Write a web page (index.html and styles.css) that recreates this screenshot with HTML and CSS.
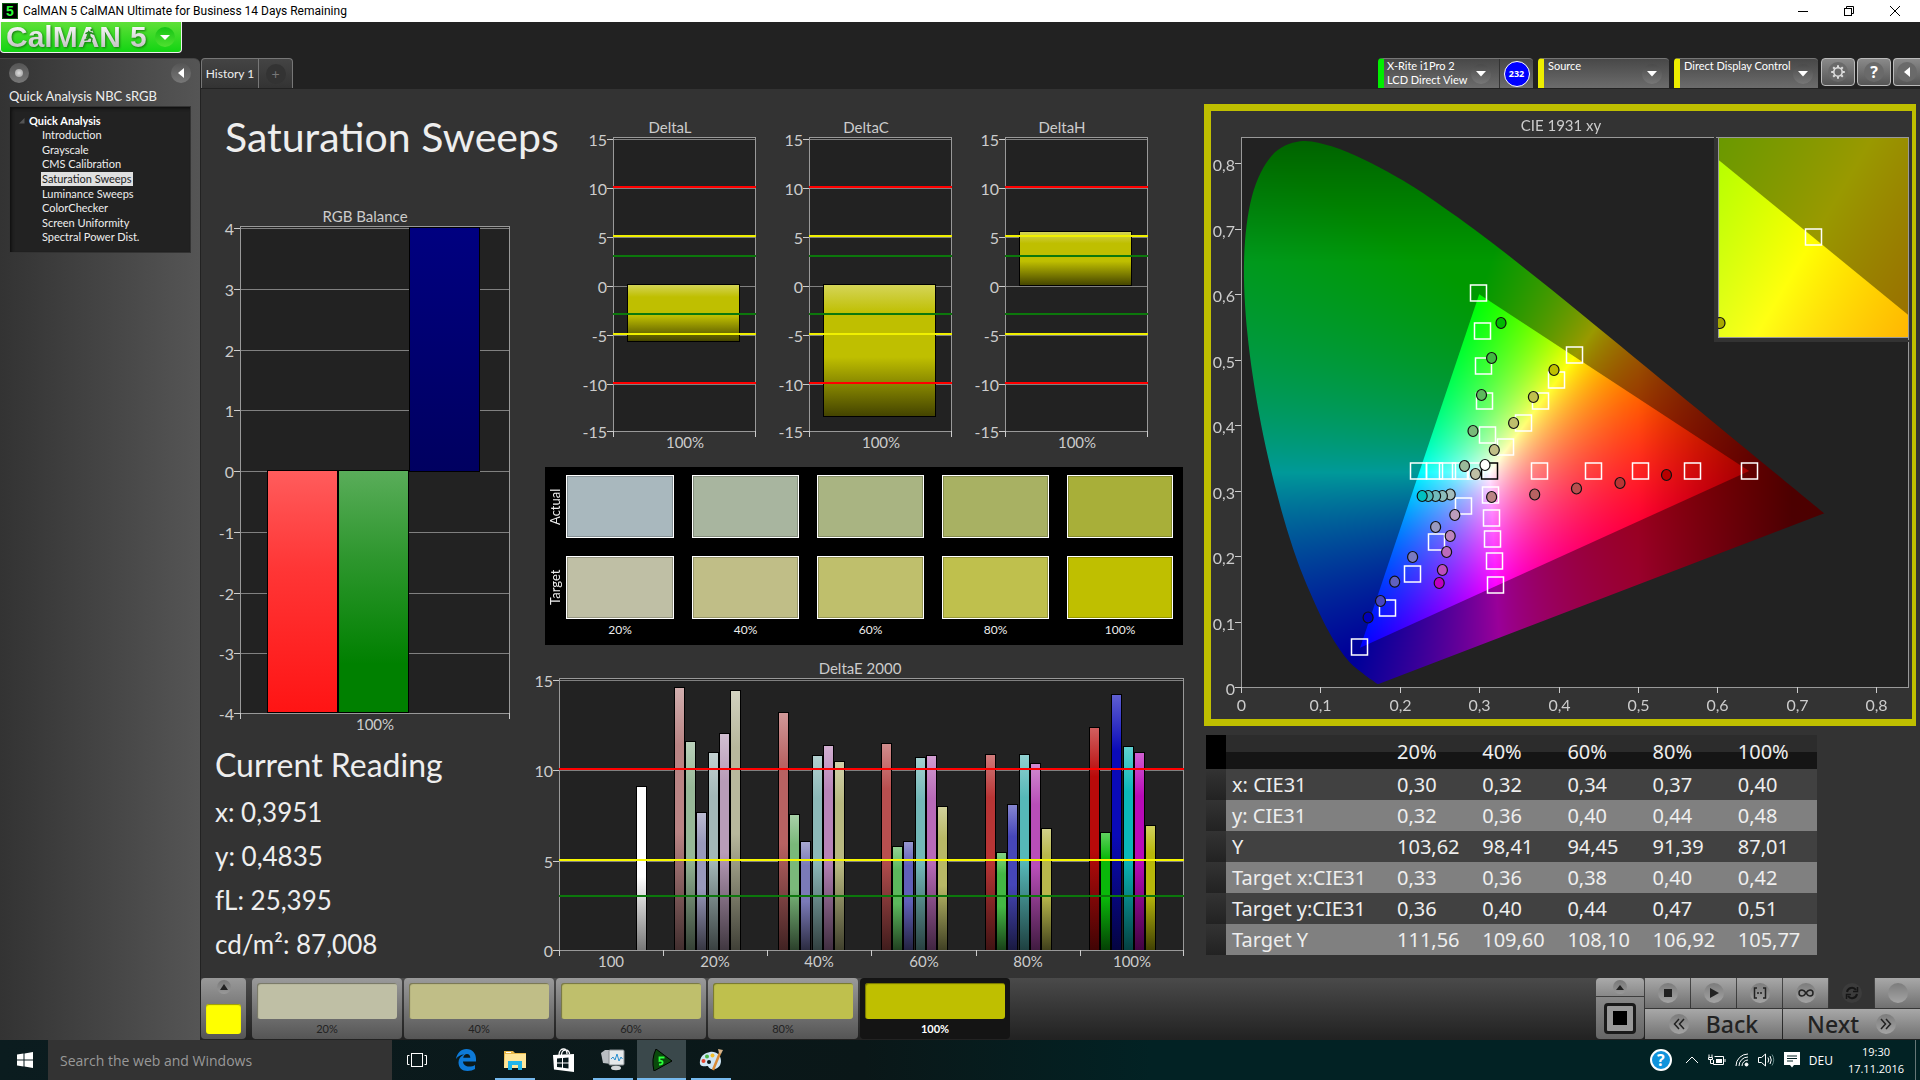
FILE: index.html
```html
<!DOCTYPE html>
<html lang="en">
<head>
<meta charset="utf-8">
<title>CalMAN 5 CalMAN Ultimate for Business 14 Days Remaining</title>
<link rel="stylesheet" href="styles.css">
</head>
<body>
<header class="titlebar">
  <span class="app-icon">5</span>
  <span class="window-title">CalMAN 5 CalMAN Ultimate for Business 14 Days Remaining</span>
  <div class="window-buttons">
    <button aria-label="Minimize"><svg width="12" height="12" viewBox="0 0 12 12"><path d="M1 6.500H11" stroke="#000"/></svg></button>
    <button aria-label="Restore"><svg width="12" height="12" viewBox="0 0 12 12" fill="none" stroke="#000"><path d="M3.500 3.500V1.500H10.500V8.500H8.500"/><rect x="1.500" y="3.500" width="7" height="7"/></svg></button>
    <button aria-label="Close"><svg width="12" height="12" viewBox="0 0 12 12"><path d="M1 1L11 11M11 1L1 11" stroke="#000"/></svg></button>
  </div>
</header>

<div class="app">
  <div class="left">
    <div class="logo-row">
      <button class="logo">
        <span class="logo-name">CalMAN</span><span class="logo-five">5</span>
        <svg class="runner" width="14" height="16" viewBox="0 0 14 16" fill="none" stroke="#1f8a1c" stroke-width="1.500" stroke-linecap="round"><circle cx="8.500" cy="3" r="1.200" fill="#1f8a1c" stroke="none"/><path d="M3 6.500L6 5L8.500 6L10.500 7M7 5.500L6 9.500L9 11.500L8.500 14.500M6 9.500L4.500 12.500L2 13"/></svg>
        <span class="round green"><svg width="12" height="7" viewBox="0 0 12 7"><path d="M1 1H11L6 6Z" fill="#fff"/></svg></span>
      </button>
    </div>
    <aside class="sidebar">
      <div class="side-top">
        <button class="round" aria-label="Options"><i class="ball"></i></button>
        <button class="round" aria-label="Collapse"><svg width="6" height="10" viewBox="0 0 6 10"><path d="M6 0V10L0 5Z" fill="#fff"/></svg></button>
      </div>
      <h2>Quick Analysis NBC sRGB</h2>
      <nav class="tree">
        <div class="tree-root"><svg width="6" height="6" viewBox="0 0 6 6"><path d="M5.500 0V5.500H0Z" fill="#555"/></svg>Quick Analysis</div>
        <ul>
          <li><a href="#">Introduction</a></li>
          <li><a href="#">Grayscale</a></li>
          <li><a href="#">CMS Calibration</a></li>
          <li><a href="#" class="current">Saturation Sweeps</a></li>
          <li><a href="#">Luminance Sweeps</a></li>
          <li><a href="#">ColorChecker</a></li>
          <li><a href="#">Screen Uniformity</a></li>
          <li><a href="#">Spectral Power Dist.</a></li>
        </ul>
      </nav>
    </aside>
  </div>

  <div class="right">
    <div class="toolbar">
      <div class="tabs">
        <button class="tab">History 1</button>
        <button class="tab plus" aria-label="Add tab"><span class="round dark">+</span></button>
      </div>
      <div class="devices">
        <div class="device meter">
          <button class="device-menu"><span>X-Rite i1Pro 2<br>LCD Direct View</span><span class="round"><svg width="10" height="6" viewBox="0 0 10 6"><path d="M0 0H10L5 5.500Z" fill="#fff"/></svg></span></button>
          <div class="badge-cell"><span class="count">232</span></div>
        </div>
        <button class="device device-menu source"><span>Source</span><span class="round"><svg width="10" height="6" viewBox="0 0 10 6"><path d="M0 0H10L5 5.500Z" fill="#fff"/></svg></span></button>
        <button class="device device-menu display"><span>Direct Display Control</span><span class="round"><svg width="10" height="6" viewBox="0 0 10 6"><path d="M0 0H10L5 5.500Z" fill="#fff"/></svg></span></button>
        <div class="tools">
          <button class="tool" aria-label="Settings"><span class="round"><svg width="16" height="16" viewBox="0 0 16 16" fill="none" stroke="#ddd"><circle cx="8" cy="8" r="4.200" stroke-width="1.600"/><path stroke-width="2" d="M8 1.200V3.400M8 12.600V14.800M1.200 8H3.400M12.600 8H14.800M3.200 3.200L4.800 4.800M11.200 11.200L12.800 12.800M3.200 12.800L4.800 11.200M11.200 4.800L12.800 3.200"/></svg></span></button>
          <button class="tool" aria-label="Help"><span class="round help">?</span></button>
          <button class="tool last" aria-label="Hide"><span class="round"><svg width="6" height="10" viewBox="0 0 6 10"><path d="M6 0V10L0 5Z" fill="#fff"/></svg></span></button>
        </div>
      </div>
    </div>

    <main class="content">
      <section class="col-a">
        <h1>Saturation Sweeps</h1>
        <svg id="rgb" class="chart" viewBox="0 0 320 530"></svg>
        <div class="reading">
          <h2>Current Reading</h2>
          <p>x: 0,3951</p>
          <p>y: 0,4835</p>
          <p>fL: 25,395</p>
          <p>cd/m²: 87,008</p>
        </div>
      </section>

      <section class="col-b">
        <div class="deltas">
          <svg id="deltaL" class="chart" viewBox="0 0 196 340"></svg>
          <svg id="deltaC" class="chart" viewBox="0 0 196 340"></svg>
          <svg id="deltaH" class="chart" viewBox="0 0 196 340"></svg>
        </div>
        <div class="swatches">
          <span class="side-label">Actual</span>
          <i class="sw a20"></i><i class="sw a40"></i><i class="sw a60"></i><i class="sw a80"></i><i class="sw a100"></i>
          <span class="side-label">Target</span>
          <i class="sw t20"></i><i class="sw t40"></i><i class="sw t60"></i><i class="sw t80"></i><i class="sw t100"></i>
          <span></span>
          <b>20%</b><b>40%</b><b>60%</b><b>80%</b><b>100%</b>
        </div>
        <svg id="deltaE" class="chart" viewBox="0 0 660 320"></svg>
      </section>

      <section class="col-c">
        <div class="cie">
          <canvas id="gamut" width="701" height="608"></canvas>
          <svg id="cie" class="chart" viewBox="0 0 701 608"></svg>
        </div>
        <table class="data">
          <thead><tr><td class="handle"></td><th class="name"></th><th>20%</th><th>40%</th><th>60%</th><th>80%</th><th>100%</th></tr></thead>
          <tbody>
            <tr><td class="handle"></td><th>x: CIE31</th><td>0,30</td><td>0,32</td><td>0,34</td><td>0,37</td><td>0,40</td></tr>
            <tr><td class="handle"></td><th>y: CIE31</th><td>0,32</td><td>0,36</td><td>0,40</td><td>0,44</td><td>0,48</td></tr>
            <tr><td class="handle"></td><th>Y</th><td>103,62</td><td>98,41</td><td>94,45</td><td>91,39</td><td>87,01</td></tr>
            <tr><td class="handle"></td><th>Target x:CIE31</th><td>0,33</td><td>0,36</td><td>0,38</td><td>0,40</td><td>0,42</td></tr>
            <tr><td class="handle"></td><th>Target y:CIE31</th><td>0,36</td><td>0,40</td><td>0,44</td><td>0,47</td><td>0,51</td></tr>
            <tr><td class="handle"></td><th>Target Y</th><td>111,56</td><td>109,60</td><td>108,10</td><td>106,92</td><td>105,77</td></tr>
          </tbody>
        </table>
      </section>
    </main>

    <footer class="strip">
      <button class="patch-now" aria-label="Current patch"><span class="round small"><svg width="8" height="6" viewBox="0 0 8 6"><path d="M0 6H8L4 0Z" fill="#222"/></svg></span><i></i></button>
      <div class="patches">
        <button class="patch"><i class="t20"></i>20%</button>
        <button class="patch"><i class="t40"></i>40%</button>
        <button class="patch"><i class="t60"></i>60%</button>
        <button class="patch"><i class="t80"></i>80%</button>
        <button class="patch active"><i class="t100"></i>100%</button>
      </div>
      <div class="transport">
        <div class="window-mode">
          <button aria-label="Expand"><span class="round small"><svg width="8" height="5" viewBox="0 0 8 5"><path d="M0 5H8L4 0Z" fill="#222"/></svg></span></button>
          <button class="pattern" aria-label="Pattern window"><span><i></i></span></button>
        </div>
        <div class="keys">
          <div class="row">
            <button aria-label="Stop"><span class="round"><svg width="8" height="8"><rect width="8" height="8" fill="#222"/></svg></span></button>
            <button aria-label="Play"><span class="round"><svg width="10" height="10" viewBox="0 0 10 10"><path d="M1 0V10L10 5Z" fill="#222"/></svg></span></button>
            <button aria-label="Read series"><span class="round"><svg width="14" height="12" viewBox="0 0 14 12" fill="none" stroke="#222" stroke-width="1.500"><path d="M4 1H1.500V11H4M10 1H12.500V11H10"/><path d="M4 6H10" stroke-dasharray="2 1"/></svg></span></button>
            <button aria-label="Continuous"><span class="round"><svg width="16" height="8" viewBox="0 0 16 8" fill="none" stroke="#222" stroke-width="1.500"><path d="M8 4C6 1 5 1 4 1A3 3 0 0 0 4 7C5 7 6 7 8 4C10 1 11 1 12 1A3 3 0 0 1 12 7C11 7 10 7 8 4Z"/></svg></span></button>
            <button class="pressed" aria-label="Refresh"><span class="round dark"><svg width="14" height="14" viewBox="0 0 14 14" fill="none" stroke="#161616" stroke-width="2"><path d="M2 6A5 5 0 0 1 11 4M12 8A5 5 0 0 1 3 10"/><path d="M12.500 1V5.500H8M1.500 13V8.500H6" stroke-width="1.500"/></svg></span></button>
            <button aria-label="Record"><span class="round"></span></button>
          </div>
          <div class="row big">
            <button><span class="round"><svg width="12" height="12" viewBox="0 0 12 12" fill="none" stroke="#222" stroke-width="1.500"><path d="M6 1L1.500 6L6 11M11 1L6.500 6L11 11"/></svg></span>Back</button>
            <button>Next<span class="round"><svg width="12" height="12" viewBox="0 0 12 12" fill="none" stroke="#222" stroke-width="1.500"><path d="M1 1L5.500 6L1 11M6 1L10.500 6L6 11"/></svg></span></button>
          </div>
        </div>
      </div>
    </footer>
  </div>
</div>

<footer class="taskbar">
  <button class="start" aria-label="Start"><svg width="18" height="18" viewBox="0 0 18 18" fill="#fff"><path d="M1 3.500L7.500 2.500V8.500H1ZM8.500 2.400L17 1V8.500H8.500ZM1 9.500H7.500V15.500L1 14.500ZM8.500 9.500H17V17L8.500 15.600Z"/></svg></button>
  <input class="search" type="text" placeholder="Search the web and Windows" aria-label="Search the web and Windows">
  <div class="apps">
    <button aria-label="Task view"><svg width="20" height="16" viewBox="0 0 20 16" fill="none" stroke="#fff"><rect x="4.500" y="1.500" width="11" height="13"/><path d="M2.500 3.500H.5V12.500H2.500M17.500 3.500H19.500V12.500H17.500"/></svg></button>
    <button aria-label="Edge"><svg width="20" height="22" viewBox="0 0 20 22"><path fill="#0d7ad8" d="M0 10C1 4 5 0 10.500 0C16.500 0 20 4.500 20 10V12.500H7C7.200 16 10 17.500 13 17.500C15.500 17.500 17.500 16.800 19 15.900V20C17 21.300 14.500 22 11.500 22C6 22 2.500 18.500 2.500 13.500C2.500 10 4.500 7 8 5.500C5 5.500 2 7.200 0 10ZM7.200 8.800H14.300C14.300 6.500 13 5 11 5C9 5 7.600 6.500 7.200 8.800Z"/></svg></button>
    <button class="open" aria-label="File Explorer"><svg width="22" height="20" viewBox="0 0 22 20"><path fill="#e8b84a" d="M0 1H9L11 3H22V18H0Z"/><path fill="#ffe69a" d="M1 4H22V18H0Z"/><path fill="#fff" d="M2 2H7V3H2Z"/><path fill="#22b5ea" d="M4 11H18V20H14V15H8V20H4Z"/></svg></button>
    <button aria-label="Store"><svg width="22" height="24" viewBox="0 0 22 24"><path d="M6 7C6 2 9 1 10.500 1C12.500 1 14 3 14 6M8.500 7C8.500 3 11 2 12.500 2C15 2 16.500 4 16.500 6" fill="none" stroke="#fff" stroke-width="1.300"/><path fill="#fff" d="M0 7L21 6V24L1 21.500Z"/><path fill="#08191c" d="M4 10.500L9 10V14.500H4ZM10 10L15.500 9.500V14.500H10ZM4 15.500H9V19.600L4 19ZM10 15.500H15.500V20.400L10 19.800Z"/></svg></button>
    <button class="open" aria-label="System monitor"><svg width="24" height="22" viewBox="0 0 24 22"><path fill="#b9bec2" d="M0 4L4 1H10V15L2 14Z"/><rect x="8" y="1" width="15" height="15" rx="1" fill="#e6e9eb" stroke="#8b9195"/><path d="M10 10L12 8L14 11L16 5L18 12L20 8L21.500 10" fill="none" stroke="#2b8fd0"/><ellipse cx="15" cy="19" rx="5" ry="2.200" fill="#d4d7d9"/></svg></button>
    <button class="open focus" aria-label="CalMAN"><svg width="22" height="22" viewBox="0 0 22 22"><path d="M5 0L21 12L3 22Q0 10 5 0Z" fill="#0a4a0c" stroke="#000"/><path d="M13.500 8.500H8.500V12C12.500 11 13 15.500 8 15.500" fill="none" stroke="#2bff3a" stroke-width="1.800"/></svg></button>
    <button class="open" aria-label="Paint"><svg width="24" height="22" viewBox="0 0 24 22"><path fill="#cfe6f5" d="M11 3C17 2 22 6 22 12C22 18 17 21 12 20C9 19 10 17 8 17C4 18 0 17 1 12C2 6 6 4 11 3Z"/><circle cx="4.500" cy="12" r="2" fill="#e6452e"/><circle cx="8" cy="7.500" r="2" fill="#4cb748"/><circle cx="13.500" cy="6.500" r="2" fill="#f3c02c"/><circle cx="10" cy="13" r="2" fill="#08191c"/><path d="M14 21L21 4" stroke="#d88a35" stroke-width="2.500"/><path d="M20 4L19 0L24 1L22 5Z" fill="#d7b48a"/></svg></button>
  </div>
  <div class="tray">
    <span class="tray-help">?</span>
    <svg width="14" height="8" viewBox="0 0 14 8" fill="none" stroke="#fff"><path d="M1 7L7 1L13 7"/></svg>
    <svg width="18" height="12" viewBox="0 0 18 12" fill="none" stroke="#fff"><path d="M1 .5V3M4 .5V3M.5 3.500H4.500V5.500H.5ZM2.500 6V9.500H5M6.500 2.500H15.500V10.500H5.500V6M17 5V8"/><rect x="8" y="5" width="6" height="4" fill="#fff" stroke="none"/></svg>
    <svg width="14" height="14" viewBox="0 0 14 14" fill="none" stroke="#fff"><path d="M1 13A12 12 0 0 1 13 1M4 13A9 9 0 0 1 13 4M7 13A6 6 0 0 1 13 7"/><circle cx="11.500" cy="11.500" r="1.500" fill="#fff"/></svg>
    <svg width="17" height="14" viewBox="0 0 17 14" fill="none" stroke="#fff"><path d="M.5 4.500H3.500L7.500 1V13L3.500 9.500H.5Z"/><path d="M10 4.500Q11.500 7 10 9.500M12 3Q14.500 7 12 11"/><path d="M14 1.500Q17.500 7 14 12.500" stroke="#688"/></svg>
    <svg width="16" height="16" viewBox="0 0 16 16"><path fill="#fff" d="M0 0H16V13H10L8 15.500L6 13H0Z"/><path d="M3 4H13M3 6.500H13M3 9H9" stroke="#022224"/></svg>
    <span class="lang">DEU</span>
    <span class="clock">19:30<br>17.11.2016</span>
    <i class="peek"></i>
  </div>
</footer>
<script src="charts.js"></script>
</body>
</html>
```
FILE: styles.css
```css
* { box-sizing: border-box; }
body {
  margin: 0;
  min-height: 100vh;
  display: flex;
  flex-direction: column;
  background: #222;
  color: #eee;
  font-family: Lato, "Liberation Sans", sans-serif;
  font-size: 14px;
}
button { font: inherit; color: inherit; border: 0; padding: 0; margin: 0; background: none; }
h1, h2, p, ul { margin: 0; padding: 0; font-weight: 400; }
ul { list-style: none; }
svg, canvas { display: block; }
i { display: block; }

/* Window title bar */
.titlebar { height: 22px; display: flex; align-items: center; background: #fff; color: #000; font: 12px/22px Roboto, sans-serif; }
.app-icon { width: 16px; height: 16px; margin: 0 5px 0 2px; background: #000; border: 1px solid #0b5a10; color: #2bff3a; font: bold 14px/14px "Liberation Sans", sans-serif; text-align: center; }
.window-buttons { margin-left: auto; display: flex; padding-right: 2px; }
.window-buttons button { width: 46px; height: 20px; display: flex; align-items: center; justify-content: center; }

.app { flex: 1; display: flex; }
.left { width: 200px; display: flex; flex-direction: column; }
.right { flex: 1; min-width: 0; display: flex; flex-direction: column; margin-left: 1px; padding-top: 36px; }

/* Logo */
.logo-row { height: 36px; }
.logo { position: relative; width: 182px; height: 31px; display: flex; align-items: center; padding-left: 5px; background: linear-gradient(#5fe038, #12d412); border: 1px solid #eee; border-top: 0; border-radius: 0 0 4px 4px; font: bold 30px/28px "Liberation Sans", sans-serif; }
.logo-name, .logo-five { background: linear-gradient(#fff, #bbb); -webkit-background-clip: text; background-clip: text; color: transparent; filter: drop-shadow(1px 1px 1px #167a10); }
.logo-five { margin-left: 9px; }
.runner { position: absolute; left: 82px; top: 5px; }
.logo .round { margin-left: auto; margin-right: 6px; }

.round { width: 20px; height: 20px; flex: none; border-radius: 50%; display: flex; align-items: center; justify-content: center; background: linear-gradient(#4a4a4a, #777); color: #fff; }
.round.green { background: linear-gradient(#14c414, #50e030); }
.round.dark { background: #333; color: #777; font-size: 14px; }
.round.small { width: 14px; height: 14px; background: linear-gradient(#777, #999); }

/* Sidebar */
.sidebar { flex: 1; padding: 4px 9px 0; background: linear-gradient(90deg, #333, #555); border-radius: 0 6px 0 0; border-top: 1px solid #444; }
.side-top { display: flex; justify-content: space-between; height: 24px; }
.ball { width: 8px; height: 8px; border-radius: 50%; background: radial-gradient(#ddd, #999); }
.side-top .round { background: linear-gradient(#555, #777); }
.sidebar h2 { font-size: 13px; line-height: 18px; }
.tree { margin-top: 1px; padding: 6px 0 5px; background: #222; border: 1px solid #333; box-shadow: inset 2px 2px 3px #111; height: 147px; }
.tree-root { display: flex; align-items: center; gap: 4px; padding-left: 9px; font-size: 11px; line-height: 15px; font-weight: 700; color: #fff; }
.tree ul { display: grid; grid-template-rows: repeat(8, 1fr); height: 117px; padding-left: 31px; font-size: 11px; line-height: 14px; }
.tree li { height: 14px; }
.tree a { color: #eee; text-decoration: none; padding: 0 1px; display: block; width: fit-content; }
.tree a.current { background: #e0e0e0; color: #222; }

/* Toolbar */
.toolbar { height: 31px; display: flex; justify-content: space-between; align-items: flex-start; }
.tabs { display: flex; border: 1px solid #777; border-bottom: 0; border-radius: 4px 4px 0 0; background: linear-gradient(#444, #333); height: 30px; }
.tab { width: 56px; font-size: 12px; }
.tab.plus { width: 34px; border-left: 1px solid #777; display: flex; align-items: center; justify-content: center; }
.devices { display: flex; align-items: flex-start; font-size: 11px; line-height: 14px; color: #fff; white-space: nowrap; }
.device { height: 30px; background: linear-gradient(#484848, #6c6c6c); border-top: 1px solid #777; border-left: 6px solid #ee0; border-radius: 4px 4px 0 0; margin-right: 5px; }
.device-menu { display: flex; justify-content: space-between; text-align: left; padding: 0 7px 0 4px; }
.device-menu .round { align-self: center; }
.meter { display: flex; border-left-color: #0e0; width: 155px; }
.meter .device-menu { flex: 1; padding: 0 8px 0 3px; }
.badge-cell { width: 34px; display: flex; align-items: center; justify-content: center; border-left: 1px solid #333; }
.count { width: 26px; height: 26px; border-radius: 50%; background: #00f; border: 1px solid #fff; display: flex; align-items: center; justify-content: center; font: bold 9px/12px "Open Sans", sans-serif; }
.source { width: 131px; }
.display { width: 144px; margin-right: 3px; }
.display .round { margin-left: 2px; }
.tools { display: flex; gap: 2px; }
.tool { width: 34px; height: 28px; border: 1px solid #bbb; border-radius: 4px; background: linear-gradient(#8a8a8a, #555); display: flex; align-items: center; justify-content: center; }
.tool.last { width: 27px; border-right: 0; border-radius: 4px 0 0 4px; }
.tool .round { background: #6a6a6a; }
.help { font: bold 16px/20px "Open Sans", sans-serif; }

/* Main content */
.content { flex: 1; display: grid; grid-template-columns: minmax(0, 320fr) minmax(0, 673fr) minmax(0, 712fr); align-items: start; padding: 0 4px 0 10px; background: #333; }
.chart { width: 100%; height: auto; }
.chart text { fill: #ccc; font-size: 15px; }
.chart text.tick { font-size: 16px; }
h1 { font-size: 41px; line-height: 48px; padding: 24px 0 44px 14px; white-space: nowrap; }
.reading { padding-left: 4px; margin-top: 10px; }
.reading h2 { font-size: 32px; line-height: 40px; margin-bottom: 5px; }
.reading p { font-size: 26px; line-height: 44px; }
.col-b { padding-right: 13px; }
.deltas { display: grid; grid-template-columns: repeat(3, 1fr); padding: 26px 32px 0 40px; }
.swatches { margin: 12px 8px 10px 14px; padding: 8px 10px 4px 0; display: grid; grid-template-columns: 21px 108fr 125fr 125fr 125fr 124fr; grid-template-rows: 63px 18px 63px 22px; background: #000; }
.swatches > :nth-child(n+7):nth-child(-n+12) { grid-row: 3; }
.swatches > :nth-child(n+13) { grid-row: 4; }
.side-label { writing-mode: vertical-rl; rotate: 180deg; text-align: center; font-size: 13px; line-height: 21px; }
.sw { border: 1px solid #fff; box-shadow: inset 0 0 0 1px rgba(0, 0, 0, .2); margin-left: 18px; }
.swatches b { font-weight: 400; font-size: 12px; line-height: 22px; text-align: center; margin-left: 18px; }
.side-label + .sw, .swatches span + b { margin-left: 0; }
.a20 { background: #a9b8be; } .a40 { background: #a8b59f; } .a60 { background: #a9b482; } .a80 { background: #a8b163; } .a100 { background: #a8af39; }
.t20 { background: #bfbfa5; } .t40 { background: #c0be87; } .t60 { background: #bfbf6c; } .t80 { background: #bfc04d; } .t100 { background: #bfbf00; }

.cie { display: grid; margin-top: 15px; border: 7px solid #bfbf00; border-right-width: 4px; }
.cie > * { grid-area: 1 / 1; width: 100%; height: auto; }

.data { margin: 9px 0 0 2px; width: 611px; table-layout: fixed; border-collapse: collapse; font: 20px/31px "Noto Sans", sans-serif; }
.data th, .data td { padding: 0 0 0 6px; font-weight: 400; text-align: left; white-space: nowrap; color: #eee; }
.data .name { width: 165px; }
.data thead th { background: linear-gradient(#2c2c2c 50%, #151515 50%); line-height: 34px; }
.data .handle { width: 20px; padding: 0; background: linear-gradient(#333, #222); }
.data thead .handle { background: #000; }
.data tbody tr { background: #414141; }
.data tbody tr:nth-child(even) { background: #808080; }

/* Patch strip */
.strip { height: 62px; display: flex; background: linear-gradient(#4a4a4a, #222); border-bottom: 1px solid #222; }
.patch-now { width: 45px; height: 61px; padding: 2px 5px 5px; display: flex; flex-direction: column; align-items: center; justify-content: space-between; background: linear-gradient(#999, #555); border-radius: 4px; margin-right: 6px; }
.patch-now i { width: 35px; height: 30px; background: #ff0; border-radius: 3px; box-shadow: inset 0 1px 1px #990; }
.patches { display: flex; gap: 2px; }
.patch { width: 150px; height: 61px; padding: 5px; border-radius: 4px; background: linear-gradient(#9a9a9a, #555); color: #222; font-size: 11px; line-height: 20px; }
.patch i { height: 36px; border-radius: 3px; box-shadow: inset 1px 1px 1px rgba(0, 0, 0, .4); }
.patch.active { background: #141414; color: #fff; font-weight: 700; }
.transport { margin-left: auto; display: flex; gap: 1px; }
.window-mode { width: 48px; display: flex; flex-direction: column; gap: 1px; }
.window-mode button { height: 18px; display: flex; align-items: center; justify-content: center; background: linear-gradient(#aaa, #888); border-radius: 4px 4px 0 0; }
.window-mode .pattern { height: 42px; background: linear-gradient(#888, #666); border-radius: 0 0 4px 4px; }
.pattern span { width: 32px; height: 31px; border: 3px solid #1a1a1a; border-radius: 4px; background: #999; display: flex; align-items: center; justify-content: center; }
.pattern i { width: 14px; height: 14px; background: #000; }
.keys { display: flex; flex-direction: column; gap: 1px; }
.row { height: 30px; display: grid; grid-template-columns: repeat(6, 45px); gap: 1px; }
.row button { display: flex; align-items: center; justify-content: center; background: linear-gradient(#a8a8a8, #707070); color: #222; }
.row .round { background: linear-gradient(#7c7c7c, #a4a4a4); }
.row button.pressed { background: #333; }
.row .round.dark { background: #3c3c3c; }
.row.big { grid-template-columns: 1fr 1fr; font: 500 23px/30px "Noto Sans", sans-serif; }
.big button { gap: 17px; }

/* Taskbar */
.taskbar { height: 40px; display: flex; background: linear-gradient(90deg, #0b1c1f, #0a1718 45%, #022224 60%); }
.start { width: 48px; display: flex; align-items: center; justify-content: center; padding-left: 1px; }
.search { width: 344px; border: 0; border-radius: 0; background: #333; color: #eee; padding: 0 12px; font: 14px "Open Sans", sans-serif; }
.search::placeholder { color: #999; opacity: 1; }
.apps { display: flex; }
.apps button { width: 49px; display: flex; align-items: center; justify-content: center; }
.apps .open { background: linear-gradient(#76b9ed, #76b9ed) bottom / 40px 2px no-repeat; }
.apps .focus { background: linear-gradient(#76b9ed, #76b9ed) bottom / 100% 2px no-repeat, #3a484b; }
.tray { margin-left: auto; display: flex; align-items: center; gap: 9px; font: 12px/17px "Open Sans", sans-serif; color: #fff; }
.tray-help { width: 22px; height: 22px; border: 2px solid #fff; border-radius: 50%; background: #1093dc; text-align: center; font-weight: 700; font-size: 16px; line-height: 18px; margin-right: 4px; }
.clock { text-align: center; margin-left: 6px; font-size: 11px; }
.peek { width: 5px; height: 40px; border-left: 1px solid #677; margin-left: 2px; }
```
FILE: charts.js
```js
// ---- bar charts -----------------------------------------------------------
const el = id => document.getElementById(id);
const line = (x1, y1, x2, y2, c, w = 1) =>
  `<line x1="${x1}" y1="${y1}" x2="${x2}" y2="${y2}" stroke="${c}" stroke-width="${w}"/>`;
const text = (x, y, s, anchor = 'middle', cls = 'tick') =>
  `<text class="${cls}" x="${x}" y="${y}" text-anchor="${anchor}">${s}</text>`;

function gradient(id, stops) {
  return `<linearGradient id="${id}" x1="0" y1="0" x2="0" y2="1">` +
    stops.map(([o, c]) => `<stop offset="${o}" stop-color="${c}"/>`).join('') + '</linearGradient>';
}
function mix(hex, other, k) {
  const n = [1, 3, 5].map(i => parseInt(hex.substr(i, 2), 16));
  return `rgb(${n.map(v => Math.round(v * (1 - k) + other * k)).join(',')})`;
}
const glossy = c => [[0, mix(c, 255, .35)], [.22, c], [.55, c], [1, mix(c, 0, .65)]];

function barChart(id, o) {
  const [x0, y0, x1, y1] = o.plot;
  const at = v => Math.round(o.zero - v * o.unit);
  let defs = '', s = '';
  s += `<rect x="${x0}" y="${y0}" width="${x1 - x0}" height="${y1 - y0}" fill="#222"/>`;
  for (const v of o.ticks) {
    const y = Math.min(at(v), y1) + .5;
    s += line(x0, y, x1, y, '#808080') + line(x0 - 6, y, x0, y, '#ccc');
    s += text(x0 - 6, y + 6, v, 'end');
  }
  o.bars.forEach((b, i) => {
    const gid = `${id}-g${i}`;
    defs += gradient(gid, b.stops || glossy(b.color));
    s += `<rect x="${b.x + .5}" y="${b.top + .5}" width="${b.w}" height="${b.bottom - b.top - 1}" fill="url(#${gid})" stroke="#000"/>`;
  });
  s += `<rect x="${x0 + .5}" y="${y0 + .5}" width="${x1 - x0 - 1}" height="${y1 - y0}" fill="none" stroke="#999"/>`;
  for (const [v, c] of o.limits || []) s += line(x0, at(v) - 1, x1, at(v) - 1, c, 2);
  for (const x of o.xTicks) s += line(x + .5, y1, x + .5, y1 + 6, '#ccc');
  for (const [x, t] of o.xLabels) s += text(x, y1 + 17, t, 'middle', 'label');
  s += text(o.titleX, y0 - 4, o.title, 'middle', 'label');
  el(id).innerHTML = `<defs>${defs}</defs>${s}`;
}

barChart('rgb', {
  title: 'RGB Balance', titleX: 154, plot: [29, 21, 299, 508], zero: 266, unit: 60.750,
  ticks: [4, 3, 2, 1, 0, -1, -2, -3, -4], xTicks: [29, 298], xLabels: [[164, '100%']],
  bars: [
    { x: 56, w: 70, top: 265, bottom: 508, stops: [[0, '#ff5c5c'], [.4, '#ff3636'], [1, '#ff1414']] },
    { x: 127, w: 70, top: 265, bottom: 508, stops: [[0, '#5aad5a'], [.35, '#2f972f'], [.8, '#008000'], [1, '#008000']] },
    { x: 198, w: 70, top: 22, bottom: 267, stops: [[0, '#000080'], [1, '#000060']] }
  ]
});

[['deltaL', 'DeltaL', 169, 227], ['deltaC', 'DeltaC', 169, 302], ['deltaH', 'DeltaH', 116, 171]].forEach(([id, title, top, bottom]) =>
  barChart(id, {
    title, titleX: 99, plot: [42, 22, 185, 316], zero: 171, unit: 9.800,
    ticks: [15, 10, 5, 0, -5, -10, -15], xTicks: [42, 184], xLabels: [[114, '100%']],
    limits: [[10, '#ff0000'], [5, '#f0f000'], [3, '#0c780c'], [-3, '#0c780c'], [-5, '#f0f000'], [-10, '#ff0000']],
    bars: [{ x: 56, w: 112, top, bottom, color: '#bfbf00' }]
  }));

const groups = [
  [143, [32, 86, 157, 97, 78, 35], ['#b98484', '#97b897', '#9999bb', '#a3b8b8', '#b89cb8', '#b8b89c']],
  [247, [57, 159, 186, 100, 90, 106], ['#b86262', '#7ab87a', '#7a7ab8', '#8cb8b8', '#b884b8', '#b8b880']],
  [350, [88, 191, 186, 102, 100, 151], ['#b84f4f', '#5cb85c', '#6060b8', '#73b8b8', '#b86ab8', '#b8b866']],
  [454, [99, 197, 149, 99, 108, 173], ['#b83535', '#44b844', '#4646b8', '#56b8b8', '#b84eb8', '#b8b84c']],
  [558, [72, 177, 39, 91, 97, 170], ['#b80a0a', '#0ab80a', '#0a0ab8', '#0ab8b8', '#b80ab8', '#b8b80a']]
];
const deBars = [{ x: 105, w: 10, top: 131, bottom: 296, stops: [[0, '#fff'], [.55, '#fff'], [1, '#777']] }];
for (const [x, tops, colors] of groups)
  tops.forEach((top, i) => deBars.push({ x: x + Math.round(i * 11.200), w: 10, top, bottom: 296, color: colors[i] }));
barChart('deltaE', {
  title: 'DeltaE 2000', titleX: 329, plot: [28, 23, 653, 295], zero: 296, unit: 18.070,
  ticks: [15, 10, 5, 0], limits: [[10, '#ff0000'], [5, '#f8f800'], [3, '#0c780c']],
  xTicks: [28, 132, 236, 340, 445, 549, 652],
  xLabels: [[80, '100'], [184, '20%'], [288, '40%'], [393, '60%'], [497, '80%'], [601, '100%']],
  bars: deBars
});

// ---- CIE 1931 chromaticity diagram ----------------------------------------
const PX = 30, PY = 26, PR = 698, PB = 576, SX = 794, SY = 654.500;
const toX = x => PX + x * SX, toY = y => PB - y * SY;
const locus = [.1741,.005,.1714,.0051,.1644,.0109,.1566,.0177,.144,.0297,.1355,.0399,.1241,.0578,.1096,.0868,.0913,.1327,.0687,.2007,.0454,.295,.0235,.4127,.0082,.5384,.0039,.6548,.0139,.7502,.0389,.812,.0743,.8338,.1142,.8262,.1547,.8059,.1929,.7816,.2296,.7543,.3016,.6923,.3731,.6245,.4441,.5547,.5125,.4866,.5752,.4242,.627,.3725,.6658,.334,.6915,.3083,.719,.2809,.7347,.2653];
const triangle = [[.3, .6], [.64, .33], [.15, .06]];

// Colour at a chromaticity: linear sRGB scaled to full brightness, fading at the green and red ends
function shade(x, y, k) {
  const X = x / y, Z = (1 - x - y) / y;
  const c = [3.2406 * X - 1.5372 - .4986 * Z, -.9689 * X + 1.8758 + .0415 * Z, .0557 * X - .204 + 1.057 * Z].map(v => Math.max(0, v));
  const m = Math.max(...c);
  let f = k;
  if (x > .5) f *= Math.max(.5, 1 - (x - .5) * 2.600);
  if (y > .65) f *= Math.max(.6, 1 - (y - .65) * 1.900);
  return c.map(v => 255 * f * v / m);
}
function field(w, h, xOf, yOf, k) {
  const c = document.createElement('canvas');
  c.width = w; c.height = h;
  const g = c.getContext('2d'), d = g.createImageData(w, h);
  for (let j = 0, p = 0; j < h; j++) for (let i = 0; i < w; i++, p += 4) {
    const [r, gg, b] = shade(xOf(i), Math.max(.002, yOf(j)), k);
    d.data[p] = r; d.data[p + 1] = gg; d.data[p + 2] = b; d.data[p + 3] = 255;
  }
  g.putImageData(d, 0, 0);
  return c;
}
const g = el('gamut').getContext('2d');
g.fillStyle = '#222';
g.fillRect(PX, PY, PR - PX, PB - PY);

const pts = [];
for (let i = 0; i < locus.length; i += 2) pts.push([toX(locus[i]), toY(locus[i + 1])]);
const W = PR - PX, H = PB - PY;
const mainX = i => i / SX, mainY = j => (H - j) / SY;
g.save();
g.beginPath();
g.moveTo(...pts[0]);
for (let i = 0; i < pts.length - 1; i++) {
  const a = pts[Math.max(0, i - 1)], b = pts[i], c = pts[i + 1], d = pts[Math.min(pts.length - 1, i + 2)];
  g.bezierCurveTo(b[0] + (c[0] - a[0]) / 6, b[1] + (c[1] - a[1]) / 6, c[0] - (d[0] - b[0]) / 6, c[1] - (d[1] - b[1]) / 6, c[0], c[1]);
}
g.closePath();
g.clip();
g.drawImage(field(W, H, mainX, mainY, .6), PX, PY);
g.restore();
g.save();
g.beginPath();
triangle.forEach(([x, y]) => g.lineTo(toX(x), toY(y)));
g.closePath();
g.clip();
g.drawImage(field(W, H, mainX, mainY, 1), PX, PY);
g.restore();

// Magnified view round the selected target
const IX = 507, IY = 26, IW = 190, IH = 200, CX = .4193, CY = .5053, MX = 3840, MY = 3950;
const inX = i => CX + (i - 95) / MX, inY = j => CY - (j - 100) / MY;
g.fillStyle = '#333';
g.fillRect(IX - 3, IY, IW + 7, IH + 4);
g.drawImage(field(IW, IH, inX, inY, .6), IX, IY);
g.save();
g.beginPath();
g.rect(IX, IY, IW, IH);
g.clip();
g.beginPath();
triangle.forEach(([x, y]) => g.lineTo(IX + 95 + (x - CX) * MX, IY + 100 - (y - CY) * MY));
g.closePath();
g.clip();
g.drawImage(field(IW, IH, inX, inY, 1), IX, IY);
g.restore();

const targets = [
  [237,156],[241,194],[242,229],[243,264],[246,298],[333,218],[315,243],[299,264],[282,286],[264,310],
  [508,334],[451,334],[399,334],[352,334],[298,334],[177,334],[193,334],[206,334],[219,334],[234,334],
  [249,358],[250,381],[251,402],[253,424],[254,448],[222,369],[195,405],[171,437],[146,471],[118,510]
];
const readings = [
  [260,186,'#00b900'],[250.600,221,'#40b940'],[240.500,258,'#5cb95c'],[232,294,'#79b979'],[223.500,329,'#9aba9a'],
  [313,233,'#bfbf00'],[292.400,260,'#bfbf4d'],[272.600,286,'#bfbf6c'],[253.300,313,'#c0be87'],[234.500,337,'#bfbfa5'],
  [425.500,338,'#b80000'],[379,346,'#b83535'],[335.500,351.500,'#b84f4f'],[293.700,357.500,'#b86262'],[250.600,360,'#b98484'],
  [209.200,357.500,'#a3bcbc'],[201.400,359,'#8cbcbc'],[194.600,359,'#70bcbc'],[187.200,359,'#50bcbc'],[181.200,359,'#00c0c0'],
  [213.800,378,'#bc9cbc'],[209.200,399,'#bc84bc'],[205.600,415,'#bc6abc'],[201.400,433,'#bc4ebc'],[198.200,446,'#bf00bf'],
  [194.600,390,'#9999bf'],[171.600,420,'#7a7abf'],[153.700,444.700,'#6060bf'],[139.500,464,'#4646bf'],[127.100,480.500,'#0000b8'],
  [244,328,'#ffffff']
];
const square = (x, y, c) => `<rect x="${x - 7.500}" y="${y - 8}" width="16" height="16" fill="none" stroke="${c}" stroke-width="1.500"/>`;
const dot = (x, y, c) => `<ellipse cx="${x}" cy="${y}" rx="5" ry="5.500" fill="${c}" stroke="#111" stroke-width="1.200"/>`;
let s = `<rect x="${PX + .5}" y="${PY + .5}" width="${W - 1}" height="${H}" fill="none" stroke="#999"/>`;
s += `<rect x="${IX - 3}" y="${IY - 1}" width="${IW + 5}" height="${IH + 5}" fill="none" stroke="#333" stroke-width="2"/>`;
s += `<rect x="${IX + .5}" y="${IY + .5}" width="${IW}" height="${IH}" fill="none" stroke="#999"/>`;
for (let i = 0; i <= 8; i++) {
  const label = i ? '0,' + i : '0', x = Math.round(toX(i / 10)) + .5, y = Math.round(toY(i / 10)) + .5;
  s += line(x, PB, x, PB + 6, '#ccc') + text(x, PB + 24, label);
  s += line(PX - 6, y, PX, y, '#ccc') + text(PX - 6, y + 7, label, 'end');
}
s += text(350, 20, 'CIE 1931 xy', 'middle', 'label');
targets.forEach(([x, y]) => s += square(PX + x, PY + y, '#fff'));
s += square(PX + 248, PY + 334, '#000');
readings.forEach(([x, y, c]) => s += dot(PX + x, PY + y, c));
s += square(IX + 95, IY + 100, '#fff');
s += `<clipPath id="inset"><rect x="${IX}" y="${IY}" width="${IW}" height="${IH}"/></clipPath><g clip-path="url(#inset)">${dot(IX + 2, IY + 186, '#a8a800')}</g>`;
el('cie').innerHTML = s;
```
